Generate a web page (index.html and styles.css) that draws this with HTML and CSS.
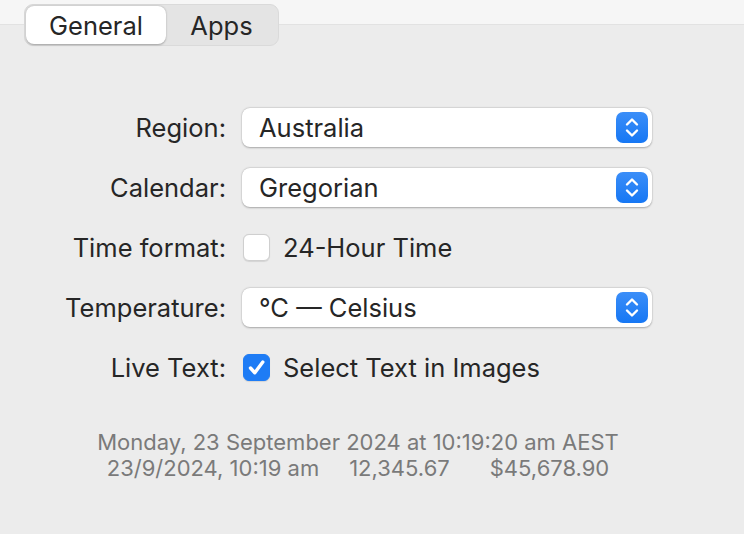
FILE: index.html
```html
<!DOCTYPE html>
<html>
<head>
<meta charset="utf-8">
<link rel="stylesheet" href="styles.css">
</head>
<body>
<div class="window">
  <div class="topbar">
    <div class="segmented">
      <div class="seg seg-active">General</div>
      <div class="seg">Apps</div>
    </div>
  </div>
  <div class="form">
    <div class="label">Region:</div>
    <div class="popup"><span class="popup-text">Australia</span>
      <span class="stepper"><svg width="32" height="31" viewBox="0 0 32 31"><path d="M11 12.5 L16 7.5 L21 12.5 M11 18.5 L16 23.5 L21 18.5" fill="none" stroke="#fff" stroke-width="2.4" stroke-linecap="round" stroke-linejoin="round"/></svg></span>
    </div>
    <div class="label">Calendar:</div>
    <div class="popup"><span class="popup-text">Gregorian</span>
      <span class="stepper"><svg width="32" height="31" viewBox="0 0 32 31"><path d="M11 12.5 L16 7.5 L21 12.5 M11 18.5 L16 23.5 L21 18.5" fill="none" stroke="#fff" stroke-width="2.4" stroke-linecap="round" stroke-linejoin="round"/></svg></span>
    </div>
    <div class="label">Time format:</div>
    <div class="check-row"><span class="checkbox"></span><span class="check-text">24-Hour Time</span></div>
    <div class="label">Temperature:</div>
    <div class="popup"><span class="popup-text">°C — Celsius</span>
      <span class="stepper"><svg width="32" height="31" viewBox="0 0 32 31"><path d="M11 12.5 L16 7.5 L21 12.5 M11 18.5 L16 23.5 L21 18.5" fill="none" stroke="#fff" stroke-width="2.4" stroke-linecap="round" stroke-linejoin="round"/></svg></span>
    </div>
    <div class="label">Live Text:</div>
    <div class="check-row"><span class="checkbox checked"><svg width="27" height="27" viewBox="0 0 27 27"><path d="M7.5 14 L11.8 18.8 L19.8 8" fill="none" stroke="#fff" stroke-width="3.4" stroke-linecap="round" stroke-linejoin="round"/></svg></span><span class="check-text">Select Text in Images</span></div>
  </div>
  <div class="sample">
    <div>Monday, 23 September 2024 at 10:19:20 am AEST</div>
    <div class="sample-row"><span>23/9/2024, 10:19 am</span><span class="gap1">12,345.67</span><span class="gap2">$45,678.90</span></div>
  </div>
</div>
</body>
</html>
```
FILE: styles.css
```css
html, body {
  margin: 0;
  padding: 0;
}
body {
  background: #ececec;
  font-family: Inter, "Liberation Sans", sans-serif;
  color: #262626;
  width: 744px;
  height: 534px;
  overflow: hidden;
}
.window {
  position: relative;
}
.topbar {
  height: 24px;
  background: #f6f6f6;
  border-bottom: 1px solid #e2e2e2;
  position: relative;
}
.segmented {
  position: absolute;
  left: 24px;
  top: 4px;
  width: 255px;
  height: 42px;
  background: #e4e4e4;
  border: 1px solid #dadada;
  border-radius: 9px;
  display: flex;
  align-items: center;
  padding: 1px;
  box-sizing: border-box;
}
.seg {
  height: 38px;
  display: flex;
  align-items: center;
  justify-content: center;
  font-size: 25.5px;
  color: #262626;
  box-sizing: border-box;
}
.seg-active {
  width: 140px;
  background: #fff;
  border-radius: 8px;
  box-shadow: 0 0.5px 2px rgba(0,0,0,0.3);
}
.seg:not(.seg-active) {
  flex: 1;
}
.form {
  display: grid;
  grid-template-columns: 226px 410px;
  column-gap: 16px;
  row-gap: 21px;
  margin-top: 83px;
  align-items: center;
  grid-auto-rows: 39px;
}
.label {
  text-align: right;
  font-size: 25.5px;
  color: #262626;
}
.popup {
  height: 39px;
  background: #fff;
  border-radius: 8px;
  box-shadow: 0 0.5px 2px rgba(0,0,0,0.28), 0 0 0 0.5px rgba(0,0,0,0.05);
  display: flex;
  align-items: center;
  justify-content: space-between;
  padding: 0 4px 0 17px;
  box-sizing: border-box;
}
.popup-text {
  font-size: 25.5px;
  color: #262626;
}
.stepper {
  width: 32px;
  height: 31px;
  border-radius: 7px;
  background: linear-gradient(#3b8ef8, #1677f4);
  display: block;
}
.stepper svg {
  display: block;
}
.check-row {
  display: flex;
  align-items: center;
}
.checkbox {
  width: 27px;
  height: 27px;
  box-sizing: border-box;
  border-radius: 6px;
  background: #fff;
  border: 1px solid #cfcfcf;
  box-shadow: 0 0.5px 1px rgba(0,0,0,0.1);
  margin-left: 1px;
  margin-right: 13px;
  display: block;
}
.checkbox.checked {
  background: #1e7cf5;
  border-color: #1e7cf5;
}
.checkbox.checked svg {
  display: block;
  margin: -1px;
}
.check-text {
  font-size: 25.5px;
  color: #262626;
}
.sample {
  margin-top: 42px;
  width: 716px;
  text-align: center;
  font-size: 22px;
  line-height: 26px;
  color: #7a7a7a;
}
.gap1 {
  margin-left: 30px;
}
.gap2 {
  margin-left: 40px;
}
```
